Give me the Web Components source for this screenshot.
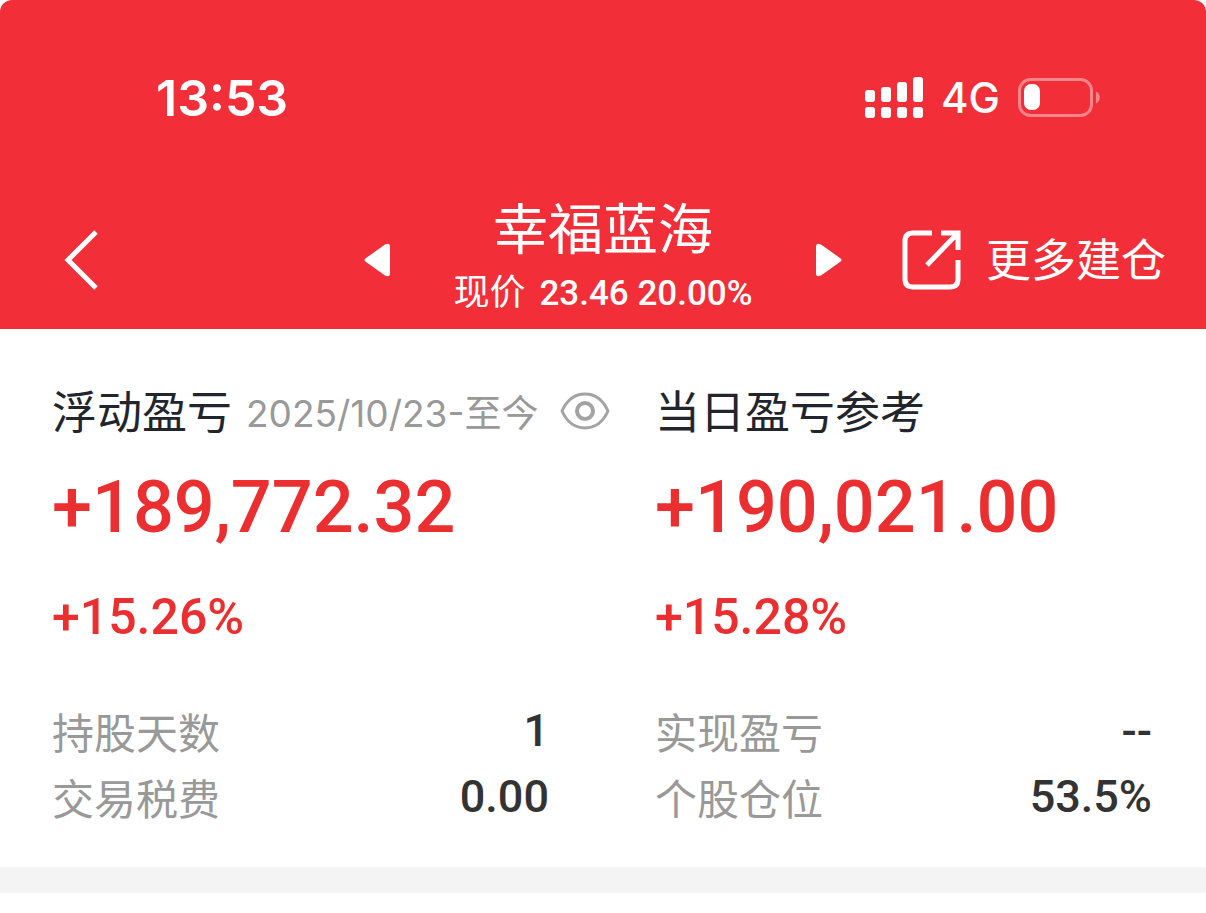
<!DOCTYPE html>
<html lang="zh-CN">
<head>
<meta charset="UTF-8">
<meta name="viewport" content="width=device-width, initial-scale=1">
<title>幸福蓝海</title>
<style>
    body {
        margin: 0;
        background: #fff;
        color: #22252c;
        font-family: "Noto Sans CJK SC", sans-serif;
        --number-font: Roboto, sans-serif;
        --red: #f22f38;
        --rise: #eb2f30;
    }

    header {
        background: var(--red);
        color: #fff;
        border-radius: 12px 12px 0 0;
    }

    main {
        display: grid;
        grid-template-columns: 1fr 1fr;
        padding: 50px 0 37px;
        border-bottom: 26px solid #f4f4f4;
    }
</style>
</head>
<body>
<header>
    <status-bar time="13:53" network="4G"></status-bar>
    <stock-nav name="幸福蓝海" price="23.46" change="20.00%">更多建仓</stock-nav>
</header>
<main>
    <profit-card amount="+189,772.32" percent="+15.26%">
        <span slot="title">浮动盈亏</span>
        <date-range slot="extra">2025/10/23-至今</date-range>
        <stat-row label="持股天数">1</stat-row>
        <stat-row label="交易税费">0.00</stat-row>
    </profit-card>
    <profit-card amount="+190,021.00" percent="+15.28%">
        <span slot="title">当日盈亏参考</span>
        <stat-row label="实现盈亏">--</stat-row>
        <stat-row label="个股仓位">53.5%</stat-row>
    </profit-card>
</main>

<script>
class StatusBar extends HTMLElement {
    connectedCallback() {
        this.attachShadow({ mode: 'open' });
        this.shadowRoot.innerHTML = `
            <style>
                :host {
                    display: flex;
                    justify-content: space-between;
                    align-items: center;
                    padding: 66px 106px 60px 156px;
                    font-family: Inter, sans-serif;
                    line-height: 64px;
                }

                .time {
                    font-size: 50px;
                    font-weight: 600;
                }

                .right {
                    display: flex;
                    align-items: center;
                    gap: 18px;
                    font-size: 42px;
                    font-weight: 500;
                }

                svg { display: block; }
            </style>
            <span class="time">${this.getAttribute('time')}</span>
            <div class="right">
                <svg width="58" height="42" viewBox="0 0 58 42" fill="#fff" aria-hidden="true">
                    <rect x="0" y="13" width="10" height="12" rx="3"/>
                    <rect x="16" y="10" width="10" height="15" rx="3"/>
                    <rect x="32" y="5" width="10" height="20" rx="3"/>
                    <rect x="48" y="0" width="10" height="25" rx="3"/>
                    <rect x="0" y="30" width="10" height="11" rx="3"/>
                    <rect x="16" y="30" width="10" height="11" rx="3"/>
                    <rect x="32" y="30" width="10" height="11" rx="3"/>
                    <rect x="48" y="30" width="10" height="11" rx="3"/>
                </svg>
                <span>${this.getAttribute('network')}</span>
                <svg width="82" height="40" viewBox="0 0 82 40" aria-hidden="true">
                    <rect x="1.5" y="1.5" width="72" height="36" rx="11" fill="none" stroke="#fff" stroke-opacity=".42" stroke-width="3"/>
                    <rect x="6" y="6" width="16" height="26" rx="7" fill="#fff"/>
                    <path d="M78 13.5c5 2 5 10 0 12z" fill="#fff" fill-opacity=".42"/>
                </svg>
            </div>
        `;
    }
}

class StockNav extends HTMLElement {
    connectedCallback() {
        this.attachShadow({ mode: 'open' });
        this.shadowRoot.innerHTML = `
            <style>
                :host {
                    display: grid;
                    grid-template-columns: 1fr auto 1fr;
                    align-items: center;
                    padding: 0 40px;
                    min-height: 139px;
                }

                button {
                    display: flex;
                    align-items: center;
                    padding: 0;
                    border: 0;
                    background: none;
                    color: inherit;
                    font: inherit;
                    cursor: pointer;
                }

                .back { padding: 0 24px; }

                .switcher {
                    display: flex;
                    align-items: center;
                    gap: 62px;
                }

                .title { text-align: center; }

                h1 {
                    margin: 0;
                    font-size: 55px;
                    font-weight: 400;
                    line-height: 64px;
                }

                p {
                    display: flex;
                    align-items: baseline;
                    gap: 14px;
                    margin: 0;
                    font-size: 36px;
                    line-height: 64px;
                    white-space: nowrap;
                }

                .quote {
                    font-family: var(--number-font);
                    font-size: 35px;
                    font-weight: 500;
                }

                .more {
                    justify-self: end;
                    gap: 24px;
                    font-size: 45px;
                    white-space: nowrap;
                }

                .more span { padding-bottom: 4px; }

                svg { display: block; }
            </style>
            <button class="back" aria-label="返回">
                <svg width="36" height="60" viewBox="0 0 36 60" fill="none" stroke="#fff" stroke-width="5">
                    <path d="M32 2L4 30l28 28"/>
                </svg>
            </button>
            <div class="switcher">
                <button aria-label="上一只">
                    <svg width="27" height="34" viewBox="0 0 27 34" fill="#fff">
                        <path d="M21 1.5Q26 -1 26 4v26q0 5-5 2.500L2 19Q-1 17 2 15z"/>
                    </svg>
                </button>
                <div class="title">
                    <h1>${this.getAttribute('name')}</h1>
                    <p>现价 <span class="quote">${this.getAttribute('price')} ${this.getAttribute('change')}</span></p>
                </div>
                <button aria-label="下一只">
                    <svg width="27" height="34" viewBox="0 0 27 34" fill="#fff">
                        <path d="M6 1.500Q1 -1 1 4v26q0 5 5 2.500L25 19q3-2 0-4z"/>
                    </svg>
                </button>
            </div>
            <button class="more">
                <svg width="60" height="60" viewBox="0 0 60 60" fill="none" stroke="#fff" stroke-width="5">
                    <path d="M30 3H11Q3 3 3 11v38q0 8 8 8h37q8 0 8-8V30"/>
                    <path d="M39 3h17v17M56 3L25 35"/>
                </svg>
                <span><slot></slot></span>
            </button>
        `;
    }
}

class DateRange extends HTMLElement {
    connectedCallback() {
        this.attachShadow({ mode: 'open' });
        this.shadowRoot.innerHTML = `
            <style>
                :host {
                    display: flex;
                    align-items: center;
                    gap: 22px;
                    color: #999;
                    font-family: Inter, "Noto Sans CJK SC", sans-serif;
                    font-size: 37px;
                    font-weight: 400;
                }

                button {
                    padding: 0;
                    border: 0;
                    background: none;
                    cursor: pointer;
                }

                svg { display: block; }
            </style>
            <slot></slot>
            <button aria-label="隐藏金额">
                <svg width="50" height="38" viewBox="0 0 50 38" fill="none" stroke="#a3a3a3" stroke-width="3">
                    <path d="M2 19C7 8 15 2 25 2s18 6 23 17c-5 11-13 17-23 17S7 30 2 19z"/>
                    <circle cx="25" cy="19" r="8" stroke-width="4"/>
                </svg>
            </button>
        `;
    }
}

class ProfitCard extends HTMLElement {
    connectedCallback() {
        this.attachShadow({ mode: 'open' });
        this.shadowRoot.innerHTML = `
            <style>
                :host {
                    display: block;
                    min-width: 0;
                    padding: 0 54px 0 52px;
                }

                .head {
                    display: flex;
                    align-items: center;
                    gap: 14px;
                    height: 64px;
                    white-space: nowrap;
                }

                h2 {
                    margin: 0;
                    padding-bottom: 4px;
                    font-size: 45px;
                    font-weight: 400;
                }

                .amount, .percent {
                    color: var(--rise);
                    font-family: var(--number-font);
                    font-weight: 500;
                }

                .amount {
                    font-size: 72px;
                    line-height: 130px;
                }

                .percent {
                    font-size: 50px;
                    line-height: 88px;
                }

                .rows { margin-top: 37px; }
            </style>
            <div class="head">
                <h2><slot name="title"></slot></h2>
                <slot name="extra"></slot>
            </div>
            <div class="amount">${this.getAttribute('amount')}</div>
            <div class="percent">${this.getAttribute('percent')}</div>
            <div class="rows"><slot></slot></div>
        `;
    }
}

class StatRow extends HTMLElement {
    connectedCallback() {
        this.attachShadow({ mode: 'open' });
        this.shadowRoot.innerHTML = `
            <style>
                :host {
                    display: flex;
                    justify-content: space-between;
                    line-height: 66px;
                }

                .label {
                    color: #999;
                    font-size: 42px;
                }

                .value {
                    color: #333;
                    font-family: var(--number-font);
                    font-size: 45px;
                    font-weight: 500;
                }
            </style>
            <span class="label">${this.getAttribute('label')}</span>
            <span class="value"><slot></slot></span>
        `;
    }
}

customElements.define('status-bar', StatusBar);
customElements.define('stock-nav', StockNav);
customElements.define('date-range', DateRange);
customElements.define('profit-card', ProfitCard);
customElements.define('stat-row', StatRow);
</script>
</body>
</html>
